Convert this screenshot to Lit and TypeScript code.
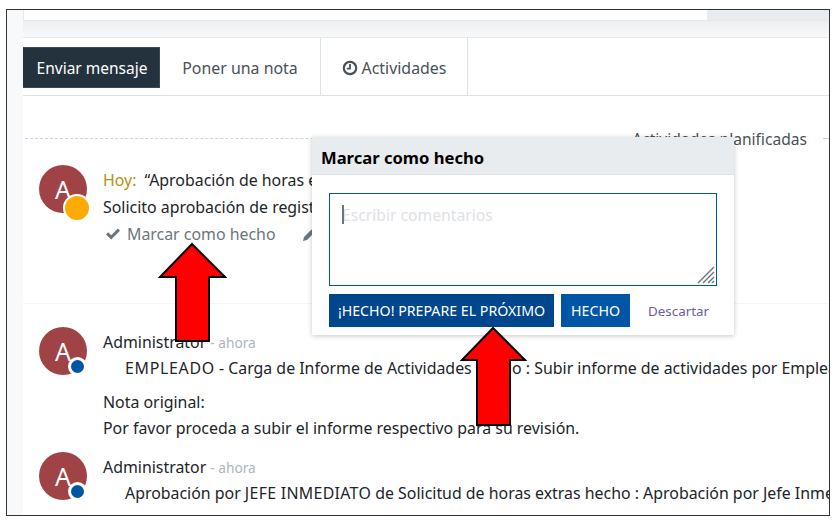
import { LitElement, html, css } from "lit";
import { customElement } from "lit/decorators.js";

const check = html`<svg class="chk" viewBox="0 0 16 14" width="16" height="14"><path d="M1 7.5 L3.2 5.3 L6.2 8.2 L12.8 1.6 L15 3.8 L6.2 12.6 Z" fill="#6c757d"/></svg>`;
const clock = html`<svg class="clk" viewBox="0 0 16 16" width="16" height="16"><circle cx="8" cy="8" r="6.2" fill="none" stroke="#495057" stroke-width="2.2"/><path d="M8 4v4.6H4.8" fill="none" stroke="#495057" stroke-width="1.8"/></svg>`;
const pencil = html`<svg class="pen" viewBox="0 0 14 14" width="14" height="14"><path d="M1 13 L2 9 L9.5 1.5 L12.5 4.5 L5 12 Z" fill="#6c757d"/></svg>`;

@customElement("app-root")
export class AppRoot extends LitElement {
  static styles = css`
    :host { display: block; width: 838px; height: 521px; background: #fff; overflow: hidden;
      font-family: "Noto Sans", "Open Sans", sans-serif; font-size: 15.9px; color: #212529; }
    .frame { position: relative; box-sizing: border-box; width: 824px; height: 507px; margin: 9px 0 0 6px;
      border: 1px solid #333; display: flex; overflow: hidden; background: #fff; }
    .gutter { width: 16px; flex: none; background: #f8f9fa; }
    .main { flex: 1; min-width: 0; white-space: nowrap; }
    .topcard { height: 10px; display: flex; border-bottom: 1px solid #e6e9ec; }
    .topcard .a { flex: 1; background: #fff; border-left: 1px solid #e6e9ec; }
    .topcard .b { width: 122px; background: #e9ecef; }
    .strip { height: 16px; background: linear-gradient(#eceef0, #f8f9fa); border-bottom: 1px solid #e6e9ec; }
    .tabs { display: flex; align-items: stretch; border-bottom: 1px solid #dee2e6; box-sizing: border-box; height: 58px; }
    .send { align-self: flex-start; margin-top: 9px; width: 137px; height: 41px; box-sizing: border-box; background: #24323e; color: #fff; font-size: 15.5px;
      display: flex; align-items: center; justify-content: center; border: 1px solid #3b4955; border-left: 0; padding-left: 2px; }
    .note { width: 160px; display: flex; align-items: center; justify-content: center; color: #495057; padding-top: 2px; box-sizing: border-box; }
    .act { width: 148px; box-sizing: border-box; display: flex; align-items: center; justify-content: center; gap: 4px; color: #495057; padding-top: 2px;
      border-left: 1px solid #dee2e6; border-right: 1px solid #dee2e6; }
    .sep { display: flex; align-items: center; gap: 8px; height: 20px; margin-top: 32px; color: #495057; font-size: 15.6px; }
    .sep .l { flex: 1; border-top: 1px dashed #ced4da; margin-left: 2px; }
    .sep .r { width: 6px; flex: none; border-top: 1px solid #ced4da; margin-left: 8px; }
    .sep span { position: relative; top: 1px; }
    .msg { display: flex; gap: 16px; padding-left: 16px; }
    .avatar { position: relative; flex: none; width: 48px; height: 48px; border-radius: 50%; background: #a04346; color: #fff;
      display: flex; align-items: center; justify-content: center; font-size: 25px; }
    .dot { position: absolute; border-radius: 50%; box-sizing: content-box; }
    .dot.big { width: 24px; height: 24px; right: -4px; bottom: -9px; background: #fa0; border: 2px solid #fff; }
    .dot.small { width: 13px; height: 13px; right: 0; bottom: -1px; background: #0056a6; border: 3px solid #fff; }
    .body { min-width: 0; padding-top: 2px; }
    .ln { height: 26px; line-height: 26px; }
    .activity .ln { height: 27px; line-height: 27px; }
    .hoy { color: #b8900f; margin-right: 4px; }
    .mute { color: #6c757d; }
    .chk { vertical-align: -1px; margin: 0 6px 0 2px; }
    .pen { vertical-align: -2px; margin-left: 26px; }
    .activity { margin-top: 17px; height: 139px; border-bottom: 1px solid #f4f5f6; box-sizing: border-box; }
    .m1 { margin-top: 23px; }
    .m2 { margin-top: 11px; }
    .when { color: #adb5bd; font-size: 13.7px; }
    .ind { padding-left: 22px; }
    .caps { letter-spacing: .7px; }
    .caps2 { letter-spacing: .3px; }
    .ln.gap { margin-top: 8px; }
    .pop { position: absolute; left: 305px; top: 127px; width: 422px; height: 198px; background: #fff; box-shadow: 0 1px 5px rgba(0,0,0,.22); white-space: nowrap; }
    .pop h3 { margin: 0; height: 38px; box-sizing: border-box; padding-left: 9px; line-height: 41px; font-size: 16.6px; font-weight: 700; color: #000; background: #e9ecef; border-bottom: 1px solid #dee2e6; }
    .box { position: relative; margin: 18px 0 0 17px; width: 388px; height: 93px; box-sizing: border-box; border: 1px solid #0056a6;
      padding: 9px 12px; color: #dee2e6; line-height: 24px; font-size: 15.7px; }
    .box .caret { position: absolute; left: 12px; top: 11px; width: 1.5px; height: 19px; background: #6c757d; }
    .grip { position: absolute; right: 1px; bottom: 1px; }
    .btns { display: flex; align-items: stretch; gap: 7px; margin: 8px 0 0 17px; height: 33px; font-size: 14.2px; }
    .btn { color: #fff; display: flex; align-items: center; justify-content: center; }
    .b1 { width: 225px; background: #00468c; }
    .b2 { width: 69px; background: #0056a6; }
    .dis { color: #6f5c9c; display: flex; align-items: center; margin-left: 11px; font-size: 13.4px; }
    .arrow { position: absolute; }
  `;

  render() {
    return html`<div class="frame">
      <div class="gutter"></div>
      <div class="main">
        <div class="topcard"><div class="a"></div><div class="b"></div></div>
        <div class="strip"></div>
        <div class="tabs">
          <div class="send">Enviar mensaje</div>
          <div class="note">Poner una nota</div>
          <div class="act">${clock}Actividades</div>
        </div>
        <div class="sep"><div class="l"></div><span>Actividades planificadas</span><div class="r"></div></div>
        <div class="activity msg">
          <div class="avatar">A<div class="dot big"></div></div>
          <div class="body">
            <div class="ln"><span class="hoy">Hoy:</span> “Aprobación de horas extras”</div>
            <div class="ln">Solicito aprobación de registro de horas</div>
            <div class="ln mute">${check}Marcar como hecho${pencil}</div>
          </div>
        </div>
        <div class="msg m1">
          <div class="avatar">A<div class="dot small"></div></div>
          <div class="body">
            <div class="ln">Administrator <span class="when">- ahora</span></div>
            <div class="ln ind"><span class="caps">EMPLEADO</span> - Carga de Informe de Actividades hecho : Subir informe de actividades por Empleado</div>
            <div class="ln gap">Nota original:</div>
            <div class="ln">Por favor proceda a subir el informe respectivo para su revisión.</div>
          </div>
        </div>
        <div class="msg m2">
          <div class="avatar">A<div class="dot small"></div></div>
          <div class="body">
            <div class="ln">Administrator <span class="when">- ahora</span></div>
            <div class="ln ind">Aprobación por <span class="caps2">JEFE INMEDIATO</span> de Solicitud de horas extras hecho : Aprobación por Jefe Inmediato</div>
          </div>
        </div>
      </div>
      <div class="pop">
        <h3>Marcar como hecho</h3>
        <div class="box"><div class="caret"></div>Escribir comentarios
          <svg class="grip" viewBox="0 0 18 18" width="18" height="18"><path d="M1 17 L17 1 M6 17 L17 6 M11 17 L17 11 M15 17 L17 15" stroke="#6c757d" stroke-width="1.4"/></svg>
        </div>
        <div class="btns">
          <div class="btn b1">¡HECHO! PREPARE EL PRÓXIMO</div>
          <div class="btn b2">HECHO</div>
          <div class="dis">Descartar</div>
        </div>
      </div>
      <svg class="arrow" style="left:150px;top:232px" width="70" height="102" viewBox="0 0 70 102"><path d="M35 2 L68 35 L52 35 L52 99 L19 99 L19 35 L3 35 Z" fill="#f00" stroke="#000" stroke-width="2"/></svg>
      <svg class="arrow" style="left:452px;top:316px" width="70" height="102" viewBox="0 0 70 102"><path d="M34 2 L66 34 L51 34 L51 99 L18 99 L18 34 L3 34 Z" fill="#f00" stroke="#000" stroke-width="2"/></svg>
    </div>`;
  }
}
